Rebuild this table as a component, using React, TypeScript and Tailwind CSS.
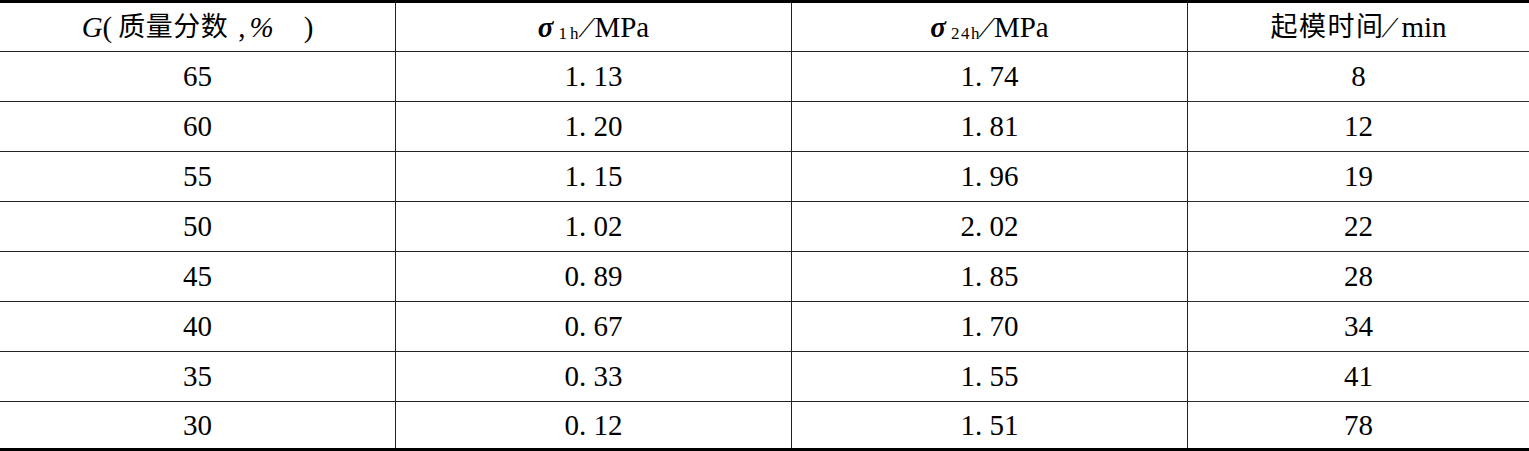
import React from "react";

const rows: string[][] = [
  ["65", "1. 13", "1. 74", "8"],
  ["60", "1. 20", "1. 81", "12"],
  ["55", "1. 15", "1. 96", "19"],
  ["50", "1. 02", "2. 02", "22"],
  ["45", "0. 89", "1. 85", "28"],
  ["40", "0. 67", "1. 70", "34"],
  ["35", "0. 33", "1. 55", "41"],
  ["30", "0. 12", "1. 51", "78"],
];

function Cell({
  children,
  last,
  bottom,
  h,
}: {
  children: React.ReactNode;
  last: boolean;
  bottom: boolean;
  h: string;
}) {
  return (
    <div
      className={
        "flex items-center justify-center whitespace-pre " +
        h +
        (last ? "" : " border-r border-[#222]") +
        (bottom ? " border-b border-[#2e2e2e]" : "")
      }
    >
      {children}
    </div>
  );
}

function Slash() {
  return <span className="inline-block ml-[2px] mr-[3px] -skew-x-[25deg] font-light">/</span>;
}

export default function App() {
  const header: React.ReactNode[] = [
    <span key="g" className="flex items-center">
      <span className="italic">G</span>
      <span>(</span>
      <span className="ml-[6px] text-[27px] tracking-[0.5px]">质量分数</span>
      <span className="ml-[10px]">,</span>
      <span className="ml-[4px] italic">%</span>
      <span className="ml-[30px]">)</span>
    </span>,
    <span key="s1" className="flex items-center">
      <span className="font-bold italic">σ</span>
      <span className="relative top-[6px] ml-[5px] text-[17px] tracking-[3px]">1h</span>
      <Slash />
      <span>MPa</span>
    </span>,
    <span key="s2" className="flex items-center">
      <span className="font-bold italic">σ</span>
      <span className="relative top-[6px] ml-[5px] text-[17px] tracking-[1.5px]">24h</span>
      <Slash />
      <span>MPa</span>
    </span>,
    <span key="t" className="flex items-center">
      <span className="text-[27px] tracking-[1.5px]">起模时间</span>
      <Slash />
      <span className="ml-[4px]">min</span>
    </span>,
  ];

  return (
    <div className="w-[1529px] h-[451px] bg-white text-black font-['Liberation_Serif','Noto_Sans_CJK_SC',serif] text-[29px] leading-none">
      <div className="grid grid-cols-[396px_396px_396px_341px] border-t-[3px] border-b-[3px] border-black">
        {header.map((c, i) => (
          <Cell key={"h" + i} last={i === 3} bottom={true} h="h-[49px]">
            {c}
          </Cell>
        ))}
        {rows.map((r, ri) =>
          r.map((c, ci) => (
            <Cell
              key={ri + "-" + ci}
              last={ci === 3}
              bottom={ri !== rows.length - 1}
              h={ri === rows.length - 1 ? "h-[46px]" : "h-[50px]"}
            >
              {c}
            </Cell>
          ))
        )}
      </div>
    </div>
  );
}
